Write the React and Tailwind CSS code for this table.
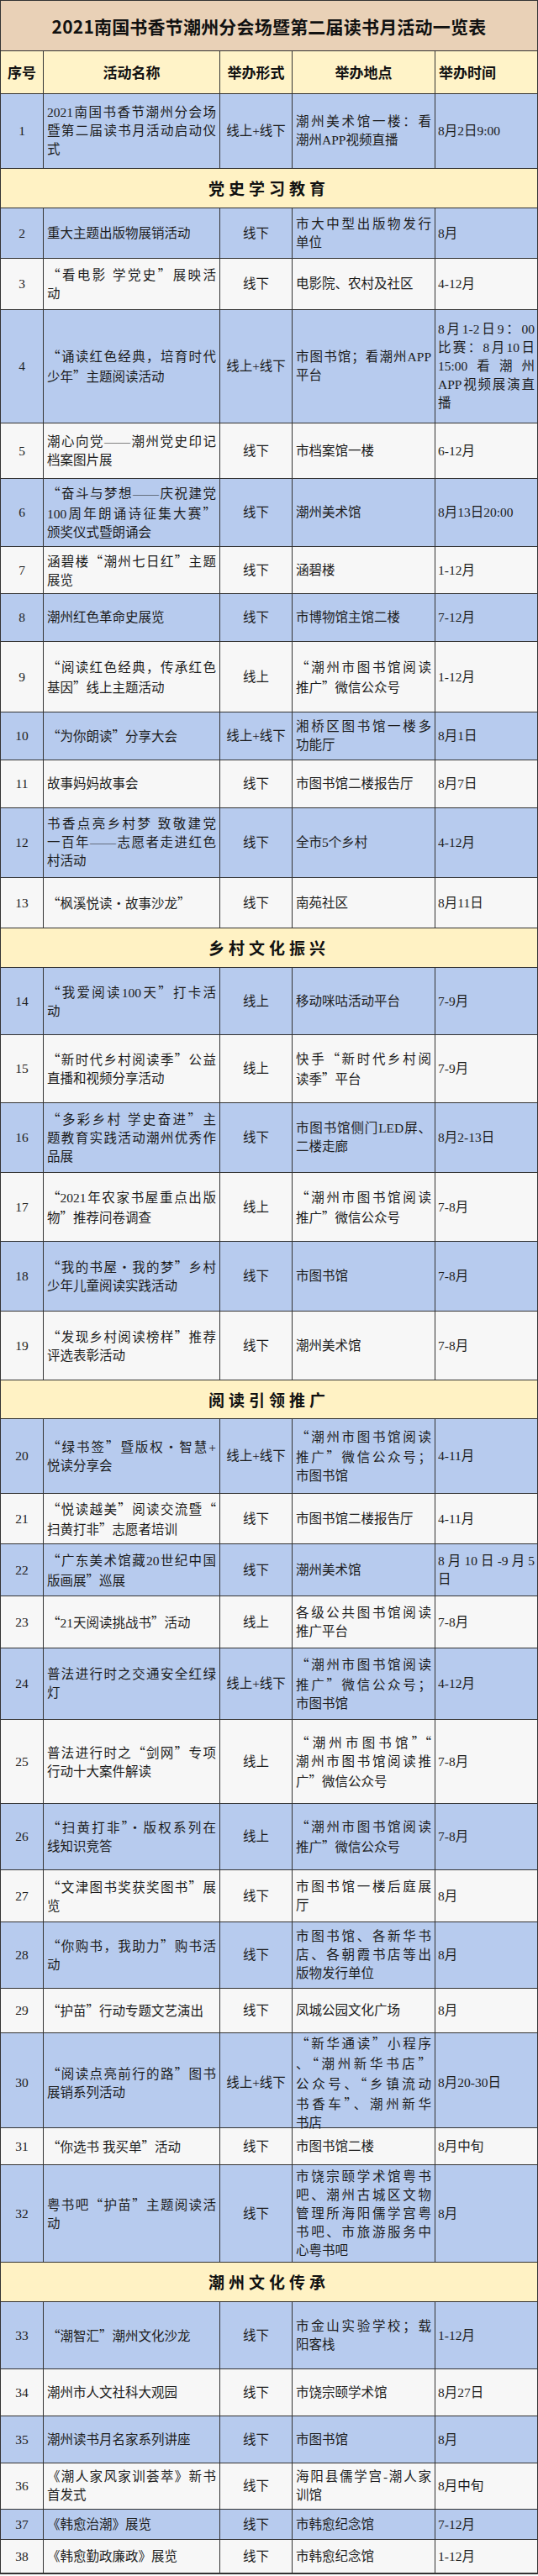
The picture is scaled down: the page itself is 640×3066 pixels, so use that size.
import React from 'react';

const BLUE = 'bg-[#b7cbee]';
const WHITE = 'bg-[#f7f7f7]';

// each row: [no, name lines, form, place lines, time lines, height class, bg]
const rows = [
    { type: 'row', no: '1', name: ['2021南国书香节潮州分会场', '暨第二届读书月活动启动仪', '式'], form: '线上+线下', place: ['潮州美术馆一楼：看', '潮州APP视频直播'], time: ['8月2日9:00'], h: 'h-[89px]', bg: BLUE },
    { type: 'section', title: '党史学习教育', h: 'h-[47px]' },
    { type: 'row', no: '2', name: ['重大主题出版物展销活动'], form: '线下', place: ['市大中型出版物发行', '单位'], time: ['8月'], h: 'h-[60px]', bg: BLUE },
    { type: 'row', no: '3', name: ['“看电影 学党史”展映活', '动'], form: '线下', place: ['电影院、农村及社区'], time: ['4-12月'], h: 'h-[61px]', bg: WHITE },
    { type: 'row', no: '4', name: ['“诵读红色经典，培育时代', '少年”主题阅读活动'], form: '线上+线下', place: ['市图书馆；看潮州APP', '平台'], time: ['8月1-2日9：00', '比赛：8月10日', '15:00看潮州', 'APP视频展演直', '播'], h: 'h-[135px]', bg: BLUE },
    { type: 'row', no: '5', name: ['潮心向党——潮州党史印记', '档案图片展'], form: '线下', place: ['市档案馆一楼'], time: ['6-12月'], h: 'h-[66px]', bg: WHITE },
    { type: 'row', no: '6', name: ['“奋斗与梦想——庆祝建党', '100周年朗诵诗征集大赛”', '颁奖仪式暨朗诵会'], form: '线下', place: ['潮州美术馆'], time: ['8月13日20:00'], h: 'h-[81px]', bg: BLUE },
    { type: 'row', no: '7', name: ['涵碧楼“潮州七日红”主题', '展览'], form: '线下', place: ['涵碧楼'], time: ['1-12月'], h: 'h-[56px]', bg: WHITE },
    { type: 'row', no: '8', name: ['潮州红色革命史展览'], form: '线下', place: ['市博物馆主馆二楼'], time: ['7-12月'], h: 'h-[57px]', bg: BLUE },
    { type: 'row', no: '9', name: ['“阅读红色经典，传承红色', '基因”线上主题活动'], form: '线上', place: ['“潮州市图书馆阅读', '推广”微信公众号'], time: ['1-12月'], h: 'h-[84px]', bg: WHITE },
    { type: 'row', no: '10', name: ['“为你朗读”分享大会'], form: '线上+线下', place: ['湘桥区图书馆一楼多', '功能厅'], time: ['8月1日'], h: 'h-[57px]', bg: BLUE },
    { type: 'row', no: '11', name: ['故事妈妈故事会'], form: '线下', place: ['市图书馆二楼报告厅'], time: ['8月7日'], h: 'h-[57px]', bg: WHITE },
    { type: 'row', no: '12', name: ['书香点亮乡村梦 致敬建党', '一百年——志愿者走进红色', '村活动'], form: '线下', place: ['全市5个乡村'], time: ['4-12月'], h: 'h-[83px]', bg: BLUE },
    { type: 'row', no: '13', name: ['“枫溪悦读·故事沙龙”'], form: '线下', place: ['南苑社区'], time: ['8月11日'], h: 'h-[60px]', bg: WHITE },
    { type: 'section', title: '乡村文化振兴', h: 'h-[47px]' },
    { type: 'row', no: '14', name: ['“我爱阅读100天”打卡活', '动'], form: '线上', place: ['移动咪咕活动平台'], time: ['7-9月'], h: 'h-[80px]', bg: BLUE },
    { type: 'row', no: '15', name: ['“新时代乡村阅读季”公益', '直播和视频分享活动'], form: '线上', place: ['快手“新时代乡村阅', '读季”平台'], time: ['7-9月'], h: 'h-[81px]', bg: WHITE },
    { type: 'row', no: '16', name: ['“多彩乡村 学史奋进”主', '题教育实践活动潮州优秀作', '品展'], form: '线下', place: ['市图书馆侧门LED屏、', '二楼走廊'], time: ['8月2-13日'], h: 'h-[83px]', bg: BLUE },
    { type: 'row', no: '17', name: ['“2021年农家书屋重点出版', '物”推荐问卷调查'], form: '线上', place: ['“潮州市图书馆阅读', '推广”微信公众号'], time: ['7-8月'], h: 'h-[82px]', bg: WHITE },
    { type: 'row', no: '18', name: ['“我的书屋·我的梦”乡村', '少年儿童阅读实践活动'], form: '线下', place: ['市图书馆'], time: ['7-8月'], h: 'h-[83px]', bg: BLUE },
    { type: 'row', no: '19', name: ['“发现乡村阅读榜样”推荐', '评选表彰活动'], form: '线下', place: ['潮州美术馆'], time: ['7-8月'], h: 'h-[82px]', bg: WHITE },
    { type: 'section', title: '阅读引领推广', h: 'h-[46px]' },
    { type: 'row', no: '20', name: ['“绿书签”暨版权·智慧+', '悦读分享会'], form: '线上+线下', place: ['“潮州市图书馆阅读', '推广”微信公众号；', '市图书馆'], time: ['4-11月'], h: 'h-[89px]', bg: BLUE },
    { type: 'row', no: '21', name: ['“悦读越美”阅读交流暨“', '扫黄打非”志愿者培训'], form: '线下', place: ['市图书馆二楼报告厅'], time: ['4-11月'], h: 'h-[60px]', bg: WHITE },
    { type: 'row', no: '22', name: ['“广东美术馆藏20世纪中国', '版画展”巡展'], form: '线下', place: ['潮州美术馆'], time: ['8月10日-9月5', '日'], h: 'h-[62px]', bg: BLUE },
    { type: 'row', no: '23', name: ['“21天阅读挑战书”活动'], form: '线上', place: ['各级公共图书馆阅读', '推广平台'], time: ['7-8月'], h: 'h-[62px]', bg: WHITE },
    { type: 'row', no: '24', name: ['普法进行时之交通安全红绿', '灯'], form: '线上+线下', place: ['“潮州市图书馆阅读', '推广”微信公众号；', '市图书馆'], time: ['4-12月'], h: 'h-[85px]', bg: BLUE },
    { type: 'row', no: '25', name: ['普法进行时之“剑网”专项', '行动十大案件解读'], form: '线上', place: ['“潮州市图书馆”“', '潮州市图书馆阅读推', '广”微信公众号'], time: ['7-8月'], h: 'h-[100px]', bg: WHITE },
    { type: 'row', no: '26', name: ['“扫黄打非”·版权系列在', '线知识竞答'], form: '线上', place: ['“潮州市图书馆阅读', '推广”微信公众号'], time: ['7-8月'], h: 'h-[79px]', bg: BLUE },
    { type: 'row', no: '27', name: ['“文津图书奖获奖图书”展', '览'], form: '线下', place: ['市图书馆一楼后庭展', '厅'], time: ['8月'], h: 'h-[62px]', bg: WHITE },
    { type: 'row', no: '28', name: ['“你购书，我助力”购书活', '动'], form: '线下', place: ['市图书馆、各新华书', '店、各朝霞书店等出', '版物发行单位'], time: ['8月'], h: 'h-[79px]', bg: BLUE },
    { type: 'row', no: '29', name: ['“护苗”行动专题文艺演出'], form: '线下', place: ['凤城公园文化广场'], time: ['8月'], h: 'h-[53px]', bg: WHITE },
    { type: 'row', no: '30', name: ['“阅读点亮前行的路”图书', '展销系列活动'], form: '线上+线下', place: ['“新华通读”小程序', '、“潮州新华书店”', '公众号、“乡镇流动', '书香车”、潮州新华', '书店'], time: ['8月20-30日'], h: 'h-[113px]', bg: BLUE },
    { type: 'row', no: '31', name: ['“你选书 我买单”活动'], form: '线下', place: ['市图书馆二楼'], time: ['8月中旬'], h: 'h-[44px]', bg: WHITE },
    { type: 'row', no: '32', name: ['粤书吧“护苗”主题阅读活', '动'], form: '线下', place: ['市饶宗颐学术馆粤书', '吧、潮州古城区文物', '管理所海阳儒学宫粤', '书吧、市旅游服务中', '心粤书吧'], time: ['8月'], h: 'h-[116px]', bg: BLUE },
    { type: 'section', title: '潮州文化传承', h: 'h-[47px]' },
    { type: 'row', no: '33', name: ['“潮智汇”潮州文化沙龙'], form: '线下', place: ['市金山实验学校；载', '阳客栈'], time: ['1-12月'], h: 'h-[80px]', bg: BLUE },
    { type: 'row', no: '34', name: ['潮州市人文社科大观园'], form: '线下', place: ['市饶宗颐学术馆'], time: ['8月27日'], h: 'h-[56px]', bg: WHITE },
    { type: 'row', no: '35', name: ['潮州读书月名家系列讲座'], form: '线下', place: ['市图书馆'], time: ['8月'], h: 'h-[56px]', bg: BLUE },
    { type: 'row', no: '36', name: ['《潮人家风家训荟萃》新书', '首发式'], form: '线下', place: ['海阳县儒学宫-潮人家', '训馆'], time: ['8月中旬'], h: 'h-[55px]', bg: WHITE },
    { type: 'row', no: '37', name: ['《韩愈治潮》展览'], form: '线下', place: ['市韩愈纪念馆'], time: ['7-12月'], h: 'h-[36px]', bg: BLUE },
    { type: 'row', no: '38', name: ['《韩愈勤政廉政》展览'], form: '线下', place: ['市韩愈纪念馆'], time: ['1-12月'], h: 'h-[40px]', bg: WHITE },
];

const GRID = 'grid grid-cols-[51px_210px_86px_170px_1fr]';

// chinese quotes and dots should take a full em like in the word doc
function fmt(text) {
    return text.split(/([“”·])/).map((part, i) =>
        part === '“' || part === '”' || part === '·'
            ? <span key={i} className="font-['Noto_Sans_CJK_SC'] [font-feature-settings:'fwid']">{part}</span>
            : part
    );
}

function Lines({ lines }) {
    return lines.map((line, i) => (
        <div
            key={i}
            className={i < lines.length - 1 ? 'whitespace-nowrap text-justify [text-align-last:justify]' : 'whitespace-nowrap'}
        >
            {fmt(line)}
        </div>
    ));
}

function Row({ row }) {
    return (
        <div className={`${GRID} ${row.h} ${row.bg} border-b border-[#333]`}>
            <div className="flex items-center justify-center border-r border-[#333]">{row.no}</div>
            <div className="flex flex-col justify-center border-r border-[#333] pl-[4px] pr-[4px]">
                <Lines lines={row.name} />
            </div>
            <div className="flex items-center justify-center border-r border-[#333] whitespace-nowrap">{row.form}</div>
            <div className="flex flex-col justify-center border-r border-[#333] pl-[4px] pr-[4px]">
                <Lines lines={row.place} />
            </div>
            <div className="flex flex-col justify-center pl-[3px] pr-[3px]">
                <Lines lines={row.time} />
            </div>
        </div>
    );
}

function Section({ row }) {
    return (
        <div className={`${row.h} flex items-center justify-center bg-[#fff2c4] border-b border-[#333]`}>
            <span className="font-['Noto_Sans_CJK_SC',sans-serif] font-bold text-[19px] tracking-[5px] text-[#111]">
                {row.title}
            </span>
        </div>
    );
}

export default function App() {
    return (
        <div className="w-[640px] h-[3066px] bg-white">
            <div className="w-[640px] border border-[#333] font-['Liberation_Serif','Noto_Sans_CJK_SC',serif] text-[15.5px] leading-[22px] text-[#1c1c1c]">
                <div className="h-[60px] flex items-center justify-center bg-[#e9d1b7] border-b border-[#333]">
                    <h1 className="font-['Noto_Sans_CJK_SC',sans-serif] font-bold text-[21px] text-[#111] tracking-[0.2px]">
                        2021南国书香节潮州分会场暨第二届读书月活动一览表
                    </h1>
                </div>
                <div className={`${GRID} h-[51px] bg-[#fff3c8] border-b border-[#333] font-['Noto_Sans_CJK_SC',sans-serif] font-bold text-[17px] text-[#111]`}>
                    <div className="flex items-center justify-center border-r border-[#333]">序号</div>
                    <div className="flex items-center justify-center border-r border-[#333]">活动名称</div>
                    <div className="flex items-center justify-center border-r border-[#333]">举办形式</div>
                    <div className="flex items-center justify-center border-r border-[#333]">举办地点</div>
                    <div className="flex items-center pl-[4px]">举办时间</div>
                </div>
                {rows.map((row, i) =>
                    row.type === 'section' ? <Section key={i} row={row} /> : <Row key={i} row={row} />
                )}
            </div>
        </div>
    );
}
